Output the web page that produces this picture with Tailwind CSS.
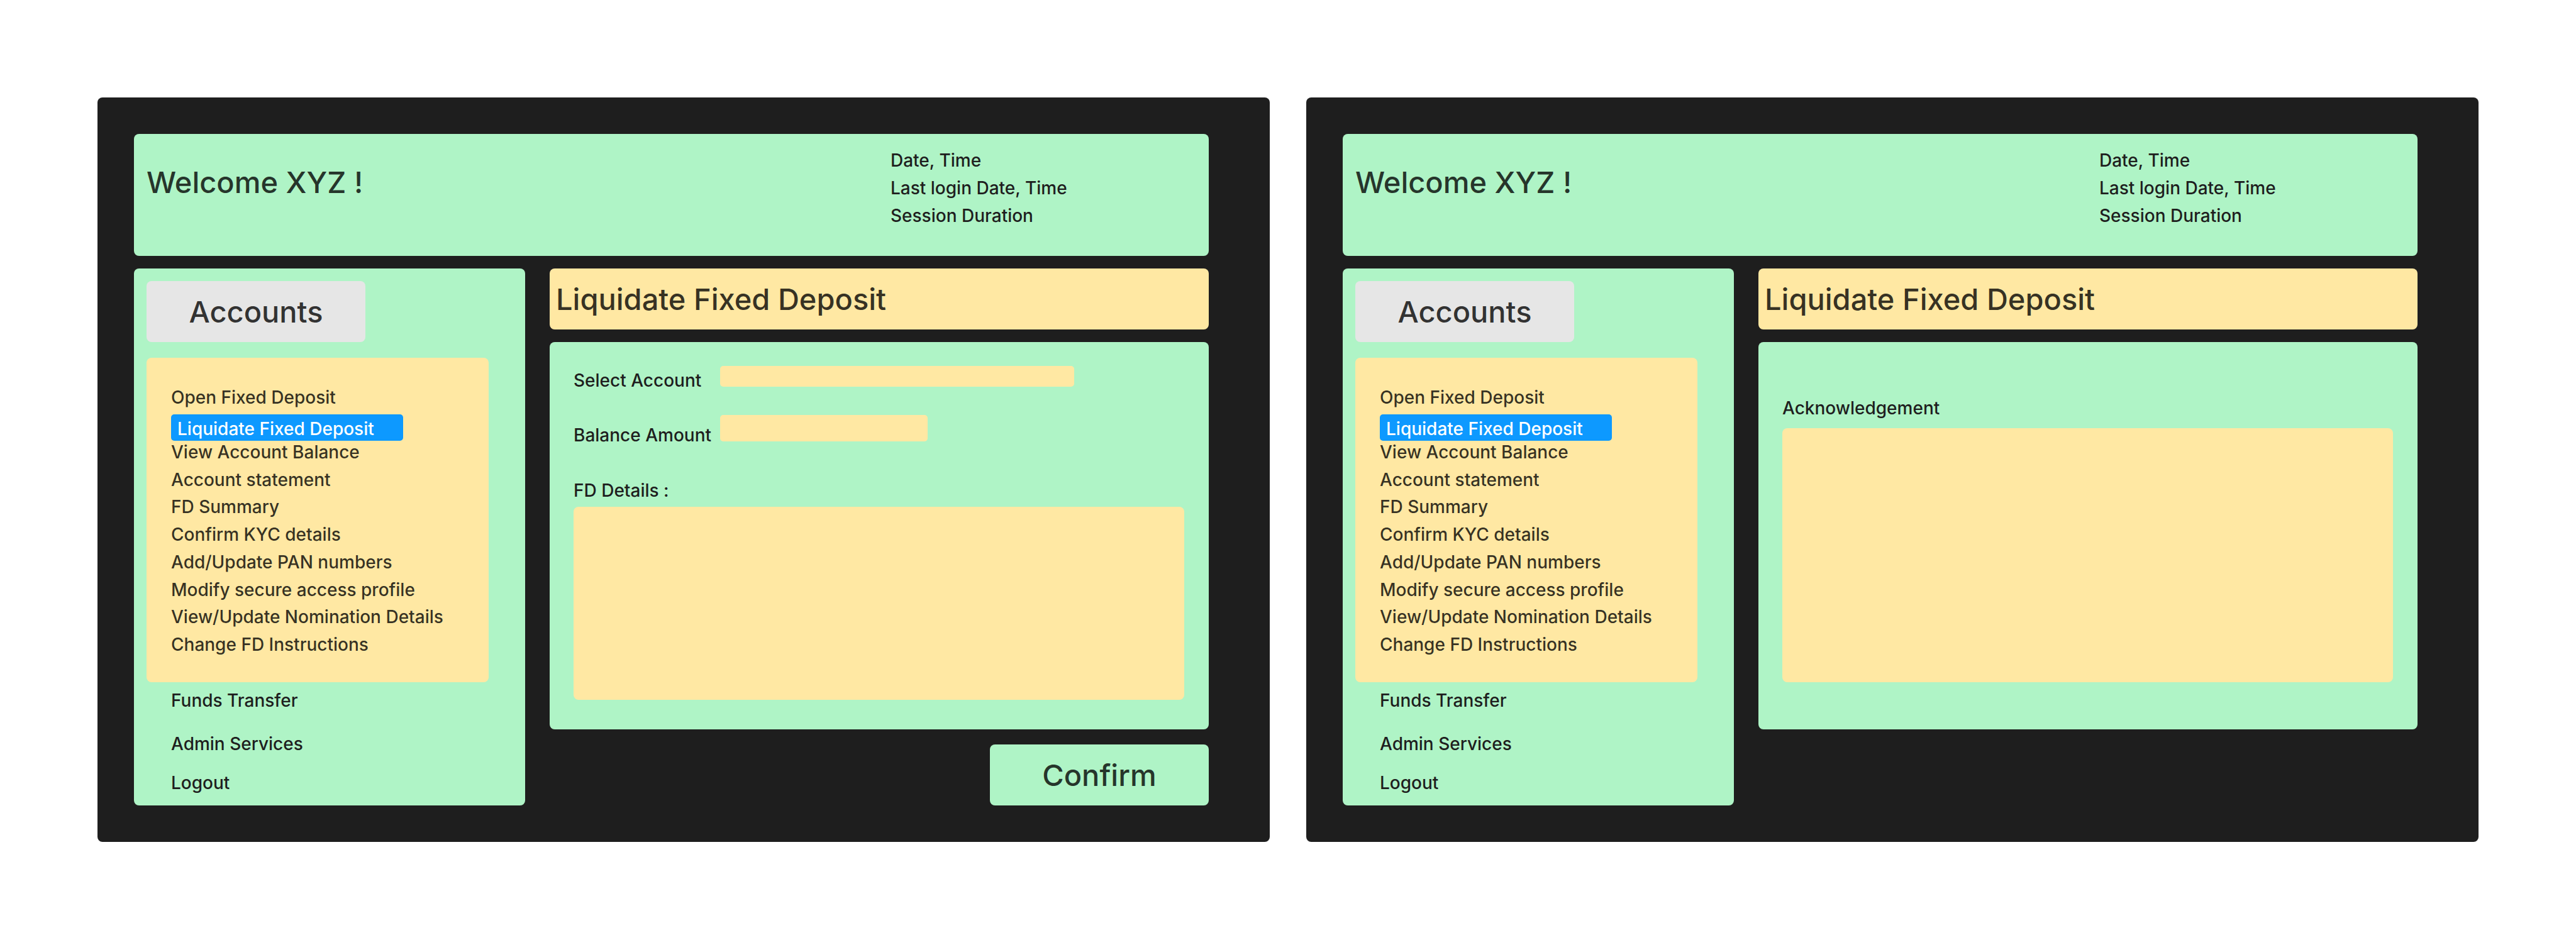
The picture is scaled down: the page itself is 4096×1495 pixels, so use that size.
<!DOCTYPE html>
<html lang="en">
<head>
<meta charset="utf-8">
<meta name="viewport" content="width=device-width, initial-scale=1">
<title>Liquidate Fixed Deposit</title>
<script src="https://cdn.jsdelivr.net/npm/@tailwindcss/browser@4"></script>
</head>
<body class="grid min-h-screen grid-cols-2 items-start gap-[58px] bg-white p-[155px] pb-0 font-[Inter,sans-serif] text-[28px] leading-[36px] font-medium text-[#1e1e1e]">

<!-- Screen 1: deposit form -->
<section class="flex flex-col gap-5 rounded-lg bg-[#1e1e1e] py-[58px] pl-[58px] pr-[97px]">
  <header class="flex h-[194px] items-start justify-between rounded-lg bg-[#aff4c6] pl-5">
    <h1 class="pt-[47px] text-[47px] leading-[59px] text-black/80">Welcome XYZ !</h1>
    <div class="w-[506px] pt-5 leading-[44px]">
      <p>Date, Time</p>
      <p>Last login Date, Time</p>
      <p>Session Duration</p>
    </div>
  </header>

  <div class="grid grid-cols-[622fr_1048fr] gap-[39px]">
    <nav class="flex flex-col rounded-lg bg-[#aff4c6] pt-5 pr-[58px] pb-[18px] pl-5" aria-label="Main">
      <button type="button" class="h-[97px] w-[348px] rounded-lg bg-[#e6e6e6] text-[47px] leading-[59px] text-black/80">Accounts</button>
      <div class="mt-[25px] flex h-[516px] flex-col rounded-lg bg-[#ffe8a3] pt-[45px] pb-[42px] pl-[39px] text-black/80">
        <a href="#open">Open Fixed Deposit</a>
        <a href="#liquidate" aria-current="page" class="mt-[9px] w-[369px] rounded-[5px] bg-[#0d99ff] pt-[5px] pb-px pl-[10px] text-white">Liquidate Fixed Deposit</a>
        <ul class="flex flex-1 flex-col justify-between">
          <li><a href="#balance">View Account Balance</a></li>
          <li><a href="#statement">Account statement</a></li>
          <li><a href="#summary">FD Summary</a></li>
          <li><a href="#kyc">Confirm KYC details</a></li>
          <li><a href="#pan">Add/Update PAN numbers</a></li>
          <li><a href="#profile">Modify secure access profile</a></li>
          <li><a href="#nomination">View/Update Nomination Details</a></li>
          <li><a href="#instructions">Change FD Instructions</a></li>
        </ul>
      </div>
      <a href="#transfer" class="mt-[11px] pl-[39px]">Funds Transfer</a>
      <a href="#admin" class="mt-[33px] pl-[39px]">Admin Services</a>
      <a href="#logout" class="mt-[26px] pl-[39px]">Logout</a>
    </nav>

    <form class="flex flex-col">
      <h2 class="flex h-[97px] items-center rounded-lg bg-[#ffe8a3] pl-[10px] text-[47px] leading-[59px] text-black/80">Liquidate Fixed Deposit</h2>
      <div class="mt-5 flex h-[616px] flex-col rounded-lg bg-[#aff4c6] pt-[38px] pr-[39px] pl-[38px]">
        <div class="flex items-start">
          <label for="account" class="w-[233px] pt-[5px]">Select Account</label>
          <select id="account" class="h-[33px] w-[563px] appearance-none rounded-[5px] bg-[#ffe8a3]"></select>
        </div>
        <div class="mt-[37px] flex items-start">
          <label for="amount" class="w-[233px] pt-[14px]">Balance Amount</label>
          <input id="amount" type="text" class="h-[42px] w-[330px] rounded-[5px] bg-[#ffe8a3]">
        </div>
        <label for="details" class="mt-[52px]">FD Details :</label>
        <textarea id="details" class="mt-[8px] h-[307px] w-full resize-none rounded-lg bg-[#ffe8a3]"></textarea>
      </div>
      <button type="submit" class="mt-6 h-[97px] w-[348px] self-end rounded-lg bg-[#aff4c6] text-[47px] leading-[59px] text-black/80">Confirm</button>
    </form>
  </div>
</section>

<!-- Screen 2: acknowledgement -->
<section class="flex flex-col gap-5 rounded-lg bg-[#1e1e1e] py-[58px] pl-[58px] pr-[97px]">
  <header class="flex h-[194px] items-start justify-between rounded-lg bg-[#aff4c6] pl-5">
    <h1 class="pt-[47px] text-[47px] leading-[59px] text-black/80">Welcome XYZ !</h1>
    <div class="w-[506px] pt-5 leading-[44px]">
      <p>Date, Time</p>
      <p>Last login Date, Time</p>
      <p>Session Duration</p>
    </div>
  </header>

  <div class="grid grid-cols-[622fr_1048fr] gap-[39px]">
    <nav class="flex flex-col rounded-lg bg-[#aff4c6] pt-5 pr-[58px] pb-[18px] pl-5" aria-label="Main">
      <button type="button" class="h-[97px] w-[348px] rounded-lg bg-[#e6e6e6] text-[47px] leading-[59px] text-black/80">Accounts</button>
      <div class="mt-[25px] flex h-[516px] flex-col rounded-lg bg-[#ffe8a3] pt-[45px] pb-[42px] pl-[39px] text-black/80">
        <a href="#open">Open Fixed Deposit</a>
        <a href="#liquidate" aria-current="page" class="mt-[9px] w-[369px] rounded-[5px] bg-[#0d99ff] pt-[5px] pb-px pl-[10px] text-white">Liquidate Fixed Deposit</a>
        <ul class="flex flex-1 flex-col justify-between">
          <li><a href="#balance">View Account Balance</a></li>
          <li><a href="#statement">Account statement</a></li>
          <li><a href="#summary">FD Summary</a></li>
          <li><a href="#kyc">Confirm KYC details</a></li>
          <li><a href="#pan">Add/Update PAN numbers</a></li>
          <li><a href="#profile">Modify secure access profile</a></li>
          <li><a href="#nomination">View/Update Nomination Details</a></li>
          <li><a href="#instructions">Change FD Instructions</a></li>
        </ul>
      </div>
      <a href="#transfer" class="mt-[11px] pl-[39px]">Funds Transfer</a>
      <a href="#admin" class="mt-[33px] pl-[39px]">Admin Services</a>
      <a href="#logout" class="mt-[26px] pl-[39px]">Logout</a>
    </nav>

    <main class="flex flex-col">
      <h2 class="flex h-[97px] items-center rounded-lg bg-[#ffe8a3] pl-[10px] text-[47px] leading-[59px] text-black/80">Liquidate Fixed Deposit</h2>
      <div class="mt-5 flex h-[616px] flex-col rounded-lg bg-[#aff4c6] pt-[87px] pr-[39px] pl-[38px]">
        <label for="acknowledgement">Acknowledgement</label>
        <textarea id="acknowledgement" readonly class="mt-[14px] h-[404px] w-full resize-none rounded-lg bg-[#ffe8a3]"></textarea>
      </div>
    </main>
  </div>
</section>
</body>
</html>
